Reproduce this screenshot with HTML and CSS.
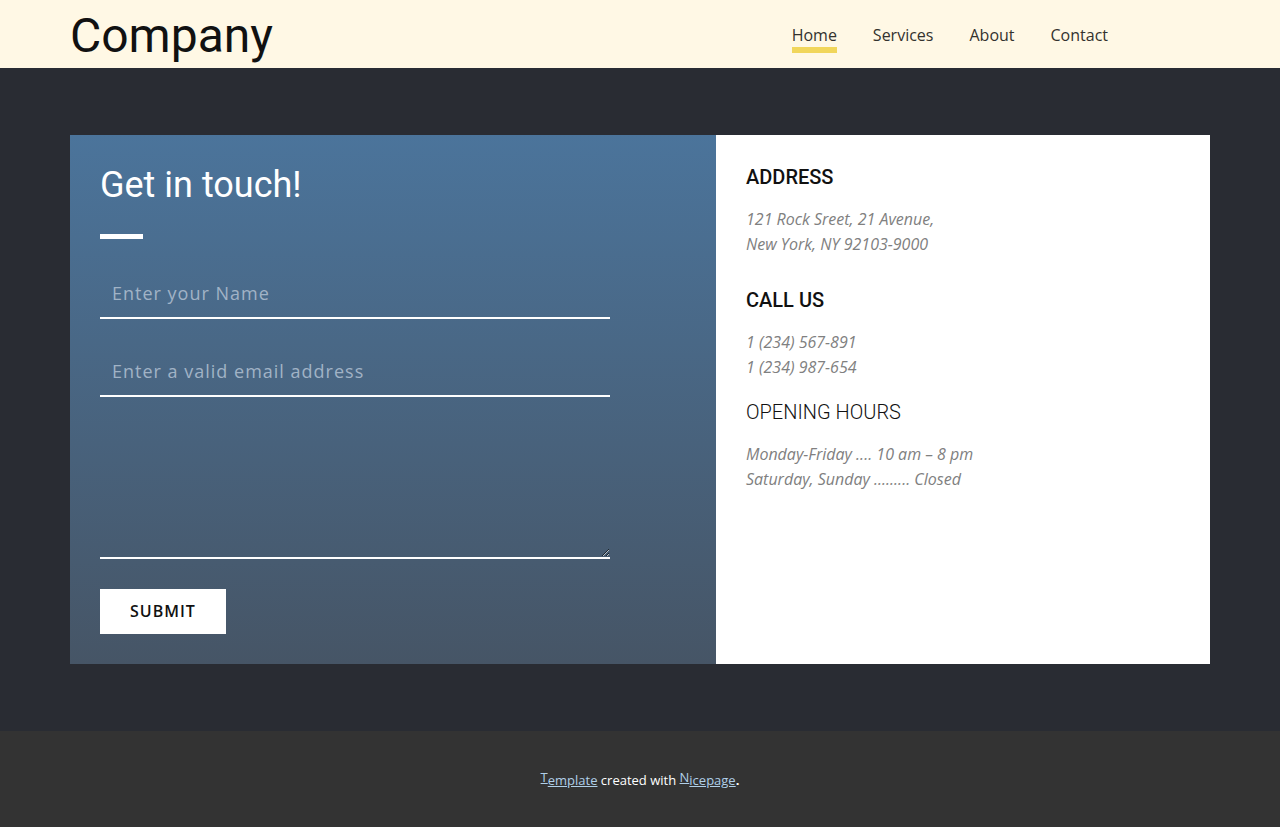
FILE: index.html
```
<!DOCTYPE html>
<html lang="en">
<head>
<meta charset="utf-8">
<meta name="viewport" content="width=device-width, initial-scale=1">
<title>Company</title>
<link rel="stylesheet" href="styles.css">
</head>
<body>
<header class="header">
  <div class="container header-inner">
    <h1 class="logo">Company</h1>
    <nav class="nav">
      <a class="nav-link active" href="#home">Home</a>
      <a class="nav-link" href="#services">Services</a>
      <a class="nav-link" href="#about">About</a>
      <a class="nav-link" href="#contact">Contact</a>
    </nav>
  </div>
</header>
<main class="main">
  <div class="container card">
    <section class="panel touch">
      <h2 class="title">Get in touch!</h2>
      <div class="rule"></div>
      <form class="form">
        <input class="field" type="text" name="name" aria-label="Name" placeholder="Enter your Name">
        <input class="field" type="email" name="email" aria-label="Email" placeholder="Enter a valid email address">
        <textarea class="field message" name="message" aria-label="Message"></textarea>
        <button class="submit" type="submit">SUBMIT</button>
      </form>
    </section>
    <section class="panel info">
      <h3 class="label">ADDRESS</h3>
      <p class="detail spaced">121 Rock Sreet, 21 Avenue,<br>New York, NY 92103-9000</p>
      <h3 class="label">CALL US</h3>
      <p class="detail">1 (234) 567-891<br>1 (234) 987-654</p>
      <h3 class="label regular">OPENING HOURS</h3>
      <p class="detail">Monday-Friday .... 10 am – 8 pm<br>Saturday, Sunday ......... Closed</p>
    </section>
  </div>
</main>
<footer class="footer">
  <p class="credit"><a class="credit-link" href="#template"><span class="cap">T</span><span class="rest">emplate</span></a> created with <a class="credit-link" href="#nicepage"><span class="cap">N</span><span class="rest">icepage</span></a><b>.</b></p>
</footer>
</body>
</html>
```
FILE: styles.css
```
* {
  box-sizing: border-box;
}

body {
  margin: 0;
  min-height: 100vh;
  background: #292c33;
  color: #111;
  font-family: "Open Sans", sans-serif;
  font-size: 16px;
}

h1, h2, h3, p {
  margin: 0;
}

.container {
  width: 100%;
  max-width: 1140px;
  margin: 0 auto;
}

.header {
  background: #fff8e5;
}

.header-inner {
  display: flex;
  align-items: center;
  justify-content: space-between;
  padding-top: 8px;
  padding-bottom: 4px;
}

.logo {
  font: 400 48px/56px Roboto, sans-serif;
}

.nav {
  display: flex;
  gap: 36px;
  padding-right: 102px;
  padding-top: 4px;
}

.nav-link {
  border-bottom: 6px solid transparent;
  color: #33322e;
  font-weight: 400;
  line-height: 24px;
  text-decoration: none;
}

.nav-link.active {
  border-color: #f1d65b;
}

.main {
  padding: 67px 16px;
}

.card {
  display: grid;
  grid-template-columns: 17fr 13fr;
}

.panel {
  padding: 30px;
}

.touch {
  background: linear-gradient(#4b749b, #465566);
}

.title {
  color: #fff;
  font: 400 36px/40px Roboto, sans-serif;
}

.rule {
  width: 43px;
  height: 5px;
  margin: 29px 0 32px;
  background: #fff;
}

.form {
  display: flex;
  flex-direction: column;
  align-items: flex-start;
  gap: 30px;
  max-width: 510px;
}

.field {
  display: block;
  width: 100%;
  height: 48px;
  padding: 9px 12px 11px;
  border: 0;
  border-bottom: 2px solid #fff;
  border-radius: 0;
  outline: 0;
  background: transparent;
  color: #fff;
  font: 500 18px/24px "Open Sans", sans-serif;
  letter-spacing: 1px;
}

.field::placeholder {
  color: #a1b3c6;
  opacity: 1;
}

.message {
  height: 132px;
  resize: vertical;
}

.submit {
  padding: 10px 30px 11px;
  border: 0;
  background: #fff;
  color: #111;
  font: 600 16px/24px "Open Sans", sans-serif;
  letter-spacing: 1px;
}

.info {
  background: #fff;
}

.label {
  font: 500 20px/24px Roboto, sans-serif;
  margin-bottom: 18px;
}

.label.regular {
  font-weight: 300;
}

.detail {
  margin-bottom: 20px;
  color: #808080;
  font-style: italic;
  line-height: 25px;
}

.detail.spaced {
  margin-bottom: 31px;
}

.footer {
  padding: 37px 16px 34px;
  background: #333;
  text-align: center;
}

.credit {
  color: #fff;
  font-size: 13px;
  line-height: 25px;
}

.credit-link {
  color: #b0cfe8;
  text-decoration: none;
}

.cap,
.rest {
  text-decoration: underline;
}

.cap {
  font-size: 13px;
  line-height: 12px;
  vertical-align: 3px;
}
```
